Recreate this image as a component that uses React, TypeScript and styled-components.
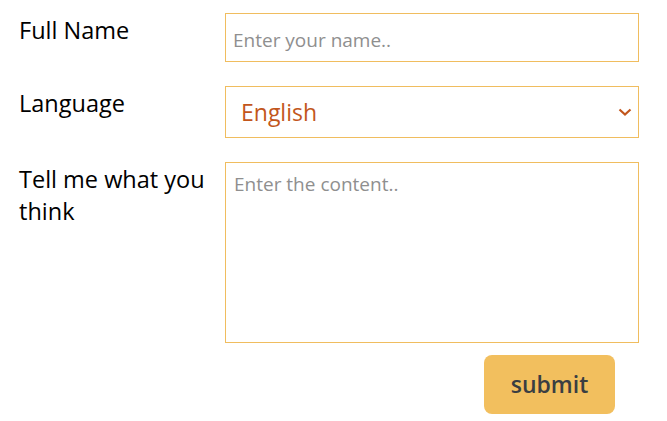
import React from "react";
import styled, { createGlobalStyle } from "styled-components";

const GlobalStyle = createGlobalStyle`
  html, body { margin: 0; padding: 0; background: #ffffff; }
  body { font-family: "Open Sans", "Noto Sans", sans-serif; }
  * { box-sizing: border-box; }
`;

const Form = styled.form`
  display: grid;
  grid-template-columns: 206px 414px;
  row-gap: 24px;
  padding: 13px 0 0 19px;
  width: 667px;
`;

const Label = styled.label`
  font-size: 23.5px;
  line-height: 32px;
  color: #000;
  padding-top: 1px;
  padding-right: 4px;
`;

const TextInput = styled.input`
  display: block;
  width: 414px;
  height: 49px;
  border: 1px solid #f0bd5f;
  border-radius: 0;
  padding: 5px 7px 0;
  font-family: inherit;
  font-size: 19px;
  color: #333;
  outline: none;
  &::placeholder { color: #8f8f8f; }
`;

const SelectWrap = styled.div`
  position: relative;
  width: 414px;
  height: 52px;
`;

const Select = styled.select`
  appearance: none;
  -webkit-appearance: none;
  width: 100%;
  height: 100%;
  border: 1px solid #f0bd5f;
  border-radius: 0;
  background: #fff;
  padding: 0 40px 0 15px;
  font-family: inherit;
  font-size: 23px;
  color: #c2561c;
  outline: none;
`;

const Chevron = styled.svg`
  position: absolute;
  right: 7px;
  top: 22px;
  width: 14px;
  height: 8px;
  pointer-events: none;
`;

const TextArea = styled.textarea`
  display: block;
  width: 414px;
  height: 181px;
  border: 1px solid #f0bd5f;
  border-radius: 0;
  padding: 8px 8px;
  font-family: inherit;
  font-size: 19px;
  resize: none;
  outline: none;
  &::placeholder { color: #8f8f8f; }
`;

const Actions = styled.div`
  grid-column: 2;
  display: flex;
  justify-content: flex-end;
  padding-right: 24px;
  margin-top: -12px;
`;

const SubmitButton = styled.button`
  width: 131px;
  height: 59px;
  border: none;
  border-radius: 8px;
  background: #f2bf5e;
  color: #3a3e42;
  font-family: inherit;
  font-size: 23px;
  font-weight: 600;
  padding: 0 0 2px;
  cursor: pointer;
`;

export default function App() {
  return (
    <>
      <GlobalStyle />
      <Form onSubmit={(e) => e.preventDefault()}>
        <Label htmlFor="fname">Full Name</Label>
        <TextInput id="fname" type="text" placeholder="Enter your name.." />
        <Label htmlFor="lang">Language</Label>
        <SelectWrap>
          <Select id="lang" defaultValue="English">
            <option>English</option>
            <option>Spanish</option>
            <option>French</option>
          </Select>
          <Chevron viewBox="0 0 14 8">
            <path d="M1.5 1.5 L7 6.5 L12.5 1.5" fill="none" stroke="#c2561c" strokeWidth="2.2" />
          </Chevron>
        </SelectWrap>
        <Label htmlFor="content">Tell me what you think</Label>
        <TextArea id="content" placeholder="Enter the content.." />
        <Actions>
          <SubmitButton type="submit">submit</SubmitButton>
        </Actions>
      </Form>
    </>
  );
}
